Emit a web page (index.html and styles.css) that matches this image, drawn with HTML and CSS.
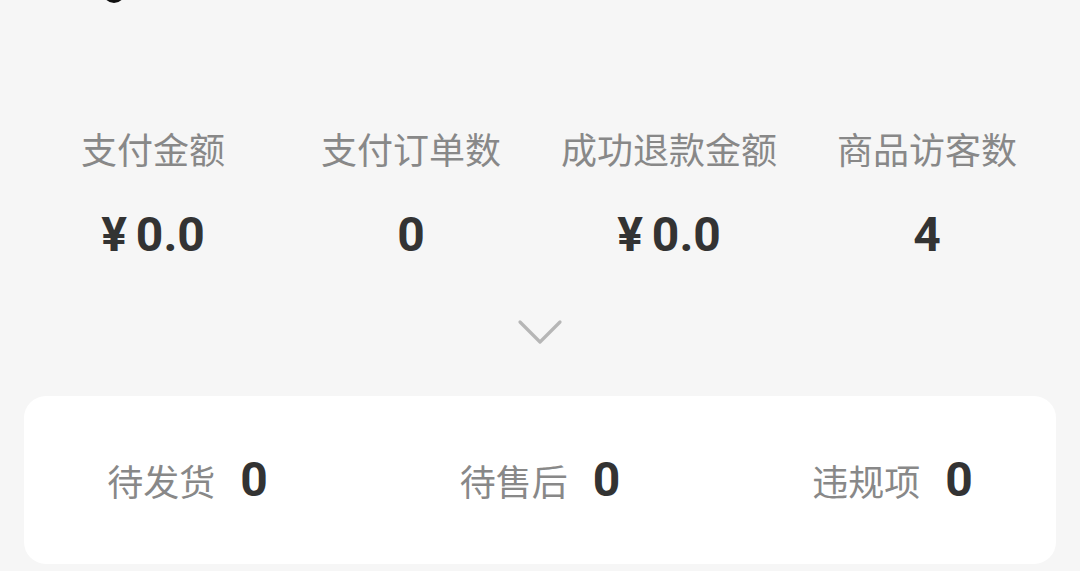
FILE: index.html
```html
<!DOCTYPE html>
<html lang="zh-CN">
<head>
<meta charset="utf-8">
<title>数据概览</title>
<link rel="stylesheet" href="styles.css">
</head>
<body>
<div class="page">
  <div class="top-cut"></div>
  <div class="stats">
    <div class="stat">
      <div class="stat-label">支付金额</div>
      <div class="stat-value"><span class="yen">¥</span>0.0</div>
    </div>
    <div class="stat">
      <div class="stat-label">支付订单数</div>
      <div class="stat-value">0</div>
    </div>
    <div class="stat">
      <div class="stat-label">成功退款金额</div>
      <div class="stat-value"><span class="yen">¥</span>0.0</div>
    </div>
    <div class="stat">
      <div class="stat-label">商品访客数</div>
      <div class="stat-value">4</div>
    </div>
  </div>
  <div class="expand">
    <svg width="48" height="28" viewBox="0 0 48 28"><path d="M4 3 L24 23 L44 3" fill="none" stroke="#b6b6b6" stroke-width="3.2" stroke-linecap="round" stroke-linejoin="round"/></svg>
  </div>
  <div class="card">
    <div class="item"><span class="item-label">待发货</span><span class="item-value">0</span></div>
    <div class="item"><span class="item-label">待售后</span><span class="item-value">0</span></div>
    <div class="item"><span class="item-label">违规项</span><span class="item-value">0</span></div>
  </div>
</div>
</body>
</html>
```
FILE: styles.css
```css
html, body {
  margin: 0;
  padding: 0;
  background: #f6f6f6;
}
body {
  font-family: "Noto Sans CJK SC", "Noto Sans", sans-serif;
  width: 1080px;
  height: 571px;
  overflow: hidden;
}
.page {
  position: relative;
  padding-top: 126px;
}
.top-cut {
  position: absolute;
  top: -19px;
  left: 103px;
  width: 22px;
  height: 22px;
  border-radius: 50%;
  background: #111;
}
.stats {
  display: grid;
  grid-template-columns: repeat(4, 1fr);
  padding: 0 24px;
}
.stat {
  display: flex;
  flex-direction: column;
  align-items: center;
}
.stat-label {
  font-size: 36px;
  line-height: 44px;
  color: #888888;
  white-space: nowrap;
}
.stat-value {
  margin-top: 37px;
  font-family: Roboto, "Liberation Sans", sans-serif;
  font-weight: 700;
  font-size: 48px;
  line-height: 56px;
  color: #333333;
}
.yen {
  margin-right: 9px;
}
.expand {
  display: flex;
  justify-content: center;
  margin-top: 56px;
  height: 28px;
}
.expand svg {
  display: block;
}
.card {
  margin: 49px 24px 0;
  height: 168px;
  background: #ffffff;
  border-radius: 22px;
  display: flex;
  align-items: center;
  justify-content: center;
  gap: 192px;
}
.item {
  display: flex;
  align-items: center;
  gap: 25px;
}
.item-label {
  font-size: 36px;
  line-height: 44px;
  color: #888888;
}
.item-value {
  font-family: Roboto, "Liberation Sans", sans-serif;
  font-weight: 700;
  font-size: 48px;
  line-height: 56px;
  color: #333333;
}
```
